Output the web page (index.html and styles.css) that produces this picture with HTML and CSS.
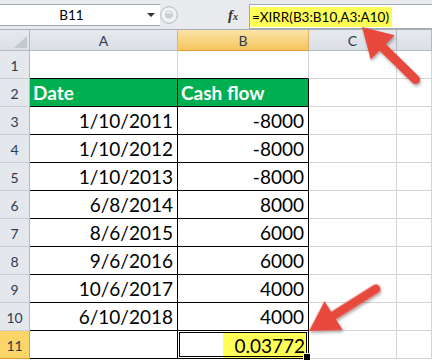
FILE: index.html
```html
<!DOCTYPE html>
<html>
<head>
<meta charset="utf-8">
<link rel="stylesheet" href="styles.css">
</head>
<body>
<div class="fbar">
  <div class="namebox"><span class="ref">B11</span><span class="caret"></span></div>
  <svg class="grip" width="18" height="20" viewBox="0 0 18 20"><circle cx="9" cy="10" r="8.3" fill="#f1f2f4" stroke="#b3b8bf"/><circle cx="9" cy="9.5" r="4" fill="#c9cdd2"/><path d="M6 8.5 a3 2 0 0 1 6 0 z" fill="#eef0f2"/></svg>
  <div class="fxzone"><span class="fx">f<small>x</small></span></div>
  <div class="formula"><span class="hl">=XIRR(B3:B10,A3:A10)</span></div>
</div>
<div class="sheet">
  <div class="ch corner"><span class="tri"></span></div>
  <div class="ch">A</div>
  <div class="ch sel">B</div>
  <div class="ch">C</div>
  <div class="ch"></div>

  <div class="rh">1</div>
  <div class="c kb"></div><div class="c kb"></div><div class="c"></div><div class="c"></div>

  <div class="rh">2</div>
  <div class="c k g">Date</div><div class="c k g">Cash flow</div><div class="c"></div><div class="c"></div>

  <div class="rh">3</div>
  <div class="c k r">1/10/2011</div><div class="c k r">-8000</div><div class="c"></div><div class="c"></div>

  <div class="rh">4</div>
  <div class="c k r">1/10/2012</div><div class="c k r">-8000</div><div class="c"></div><div class="c"></div>

  <div class="rh">5</div>
  <div class="c k r">1/10/2013</div><div class="c k r">-8000</div><div class="c"></div><div class="c"></div>

  <div class="rh">6</div>
  <div class="c k r">6/8/2014</div><div class="c k r">8000</div><div class="c"></div><div class="c"></div>

  <div class="rh">7</div>
  <div class="c k r">8/6/2015</div><div class="c k r">6000</div><div class="c"></div><div class="c"></div>

  <div class="rh">8</div>
  <div class="c k r">9/6/2016</div><div class="c k r">6000</div><div class="c"></div><div class="c"></div>

  <div class="rh">9</div>
  <div class="c k r">10/6/2017</div><div class="c k r">4000</div><div class="c"></div><div class="c"></div>

  <div class="rh">10</div>
  <div class="c k r">6/10/2018</div><div class="c k r">4000</div><div class="c"></div><div class="c"></div>

  <div class="rh sel">11</div>
  <div class="c kb"></div><div class="c r active"><span class="hlv">0.03772</span></div><div class="c"></div><div class="c"></div>
</div>
<svg class="arrows" width="432" height="360" viewBox="0 0 432 360">
  <defs>
    <filter id="sh" x="-30%" y="-30%" width="160%" height="160%">
      <feDropShadow dx="1" dy="2" stdDeviation="1.5" flood-color="#000" flood-opacity="0.35"/>
    </filter>
  </defs>
  <g filter="url(#sh)" fill="#e8483e" stroke="#e8483e">
    <g transform="translate(362,27) rotate(44.5)">
      <line x1="22" y1="0" x2="75" y2="0" stroke-width="9" stroke-linecap="round"/>
      <polygon points="0,0 29,-17 29,17" stroke="none"/>
    </g>
    <g transform="translate(309,331) rotate(-32.2)">
      <line x1="22" y1="0" x2="79" y2="0" stroke-width="9" stroke-linecap="round"/>
      <polygon points="0,0 29,-17 29,17" stroke="none"/>
    </g>
  </g>
</svg>
</body>
</html>
```
FILE: styles.css
```css
* { box-sizing: border-box; }
body {
  margin: 0;
  width: 432px;
  height: 360px;
  overflow: hidden;
  position: relative;
  background: #fff;
  font-family: Lato, "Open Sans", sans-serif;
  color: #000;
}
.fbar {
  height: 30px;
  background: #e8eaed;
  border-bottom: 1px solid #a9afb6;
  display: flex;
  align-items: flex-start;
  padding-top: 4px;
}
.namebox {
  width: 160px;
  height: 22px;
  background: #fff;
  border-top: 1px solid #a3a9b0;
  border-bottom: 1px solid #a3a9b0;
  display: flex;
  align-items: center;
}
.ref {
  width: 143px;
  text-align: center;
  font-size: 13.5px;
}
.caret {
  width: 0;
  height: 0;
  border-left: 4px solid transparent;
  border-right: 4px solid transparent;
  border-top: 4px solid #333;
  margin-left: 4px;
}
.grip { display: block; flex: 0 0 18px; margin-top: 1px; }
.fxzone {
  flex: 0 0 71px;
  height: 22px;
  display: flex;
  align-items: center;
  justify-content: flex-end;
  padding-right: 11px;
}
.fx {
  font-family: "Liberation Serif", serif;
  font-style: italic;
  font-weight: 700;
  font-size: 15px;
  color: #333;
}
.fx small { font-size: 10px; }
.formula {
  flex: 1;
  height: 25px;
  background: #fff;
  border: 1px solid #a3a9b0;
  border-right: 0;
  display: flex;
  align-items: center;
}
.hl {
  background: #ffff57;
  font-size: 13.5px;
  line-height: 20px;
  padding: 0 3px 0 2px;
}
.sheet {
  display: grid;
  grid-template-columns: 30px 148px 131px 88px 1fr;
  grid-template-rows: 21px repeat(11, 28px);
}
.ch {
  background: linear-gradient(#e6e9ee, #dbe0e6);
  border-right: 1px solid #b4bac2;
  border-bottom: 1px solid #b4bac2;
  font-size: 14px;
  color: #2a3c52;
  display: flex;
  align-items: center;
  justify-content: center;
}
.ch.sel {
  background: linear-gradient(#fbe3a8, #f6c65c);
  border-bottom-color: #e09c34;
  border-right-color: #d9b06a;
}
.corner {
  align-items: flex-end;
  justify-content: flex-end;
  padding: 0 2px 2px 0;
}
.tri {
  width: 0;
  height: 0;
  border-left: 13px solid transparent;
  border-bottom: 12px solid #c3c8ce;
}
.rh {
  background: #e4e7ec;
  border-right: 1px solid #b4bac2;
  border-bottom: 1px solid #c9ced4;
  font-size: 14px;
  color: #2a3c52;
  display: flex;
  align-items: flex-end;
  justify-content: center;
  padding-bottom: 4px;
}
.rh.sel {
  background: #fcd568;
  border-right-color: #e09c34;
  border-bottom-color: #e09c34;
}
.c {
  border-right: 1px solid #d4d4d4;
  border-bottom: 1px solid #d4d4d4;
  font-size: 19px;
  display: flex;
  align-items: flex-end;
  padding: 0 4px 2px 3px;
  white-space: nowrap;
}
.r { justify-content: flex-end; }
.k { border-right-color: #000; border-bottom-color: #000; }
.kb { border-bottom-color: #000; }
.g { background: #00b050; color: #fff; font-weight: 700; }
.active {
  position: relative;
  padding: 1px 2px 0 0;
}
.active::after {
  content: "";
  position: absolute;
  top: -1px;
  left: -1px;
  right: -1px;
  bottom: -1px;
  border: 3px double #000;
}
.active::before {
  content: "";
  position: absolute;
  right: -3px;
  bottom: -3px;
  width: 6px;
  height: 6px;
  background: #000;
  border: 1px solid #fff;
  z-index: 2;
}
.hlv {
  background: #ffff57;
  height: 100%;
  display: flex;
  align-items: flex-end;
  padding: 0 1px 1px 11px;
}
.arrows {
  position: absolute;
  top: 0;
  left: 0;
  pointer-events: none;
}
```
